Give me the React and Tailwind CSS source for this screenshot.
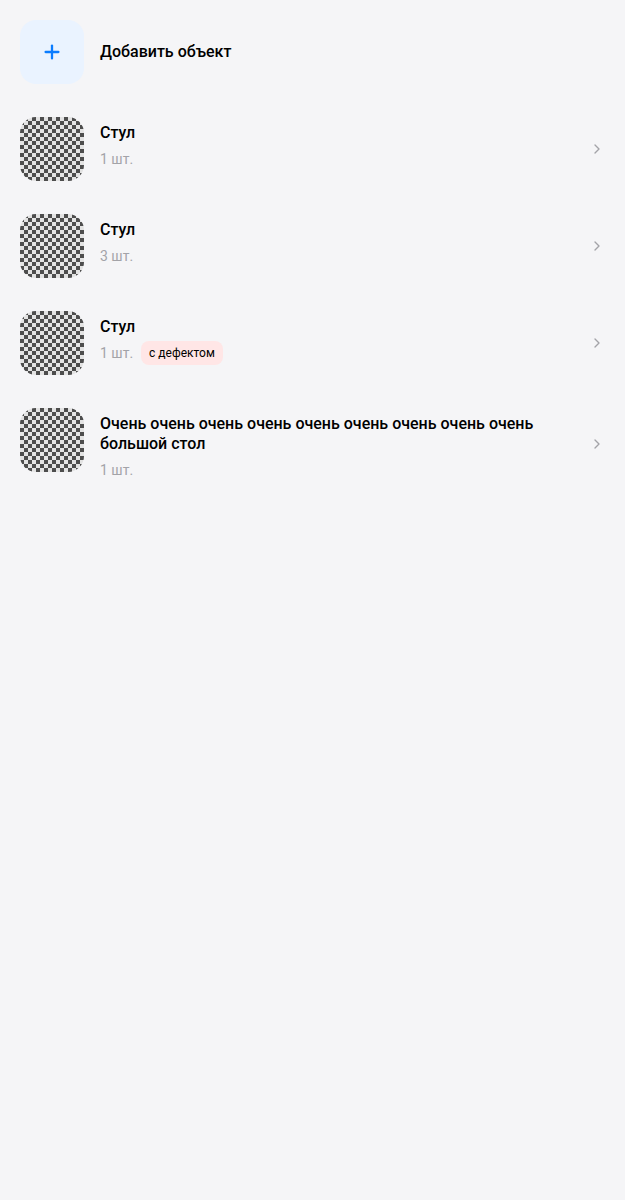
import { ChevronRight, Plus } from 'lucide-react';

const items = [
    { id: 1, name: 'Стул', count: 1 },
    { id: 2, name: 'Стул', count: 3 },
    { id: 3, name: 'Стул', count: 1, defect: true },
    { id: 4, name: 'Очень очень очень очень очень очень очень очень очень большой стол', count: 1 },
];

const Thumb = () => (
    <div className="w-16 h-16 shrink-0 rounded-2xl bg-[repeating-conic-gradient(#4d4d4d_0_25%,#e3e3e3_0_50%)] bg-[length:8px_8px]" />
);

const App = () => {
    return (
        <div className="min-h-[1200px] bg-[#f5f5f7] pt-5 px-5 font-['Roboto',sans-serif]">
            <div className="flex flex-col gap-[33px]">
                {/* Add object */}
                <div className="flex items-center gap-4">
                    <div className="w-16 h-16 rounded-2xl bg-[#eaf3ff] flex items-center justify-center">
                        <Plus size={22} strokeWidth={2.5} className="text-[#0a7cff]" />
                    </div>
                    <span className="text-[16px] font-medium text-black">Добавить объект</span>
                </div>

                {items.map((item) => (
                    <div key={item.id} className="flex items-center gap-4">
                        <div className="flex-1 min-w-0 flex items-start gap-4">
                            <Thumb />
                            <div className="flex-1 min-w-0 pt-[6px] pr-4">
                                <div className="text-[16px] leading-5 font-medium text-black">{item.name}</div>
                                <div className="flex items-center gap-2 mt-[6px] h-5">
                                    <span className="text-[14px] text-[#a3a3a8]">{item.count} шт.</span>
                                    {item.defect && (
                                        <span className="px-2 h-6 flex items-center rounded-lg bg-[#ffe6e6] text-[12px] text-black">с дефектом</span>
                                    )}
                                </div>
                            </div>
                        </div>
                        <ChevronRight size={16} strokeWidth={2} className="text-[#a3a3a8] shrink-0" />
                    </div>
                ))}
            </div>
        </div>
    );
};

export default App;
